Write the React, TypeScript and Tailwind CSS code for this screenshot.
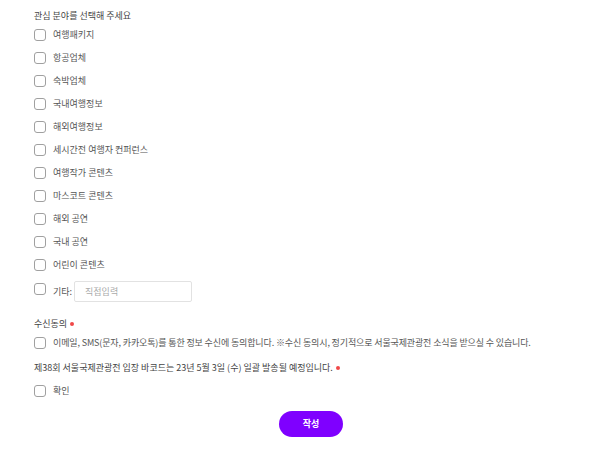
import React from "react";

const items = [
  "여행패키지",
  "항공업체",
  "숙박업체",
  "국내여행정보",
  "해외여행정보",
  "세시간전 여행자 컨퍼런스",
  "여행작가 콘텐츠",
  "마스코트 콘텐츠",
  "해외 공연",
  "국내 공연",
  "어린이 콘텐츠",
];

function Box({ className = "" }: { className?: string }) {
  return (
    <span
      className={
        "inline-block w-[12px] h-[12px] rounded-[3px] border border-[#a0a0a0] bg-white shrink-0 " +
        className
      }
    />
  );
}

function Dot() {
  return <span className="inline-block w-[4px] h-[4px] rounded-full bg-[#f04848] ml-[3px] align-middle" />;
}

export default function App() {
  return (
    <div
      className="w-[600px] h-[467px] bg-white pl-[34px] pr-[12px] pt-[9px] text-[9px] text-[#555]"
      style={{ fontFamily: '"Noto Sans CJK KR", "Noto Sans", sans-serif' }}
    >
      <div className="leading-[14px] h-[14px] text-[#444]">관심 분야를 선택해 주세요</div>
      {items.map((t) => (
        <div key={t} className="h-[23px] flex items-center">
          <Box />
          <span className="ml-[7px] leading-[14px]">{t}</span>
        </div>
      ))}
      <div className="mt-[5px] h-[21px] flex items-start">
        <Box className="mt-[2px]" />
        <span className="ml-[7px] leading-[21px]">기타:</span>
        <div className="ml-[2px] w-[118px] h-[21px] border border-[#e2e2e2] rounded-[2px] flex items-center pl-[10px] text-[#aaa]">
          직접입력
        </div>
      </div>
      <div className="mt-[15px] leading-[14px] h-[14px] flex items-center text-[#444]">
        수신동의
        <Dot />
      </div>
      <div className="h-[23px] flex items-center">
        <Box />
        <span className="ml-[7px] leading-[14px] tracking-[-0.015em]">
          이메일, SMS(문자, 카카오톡)를 통한 정보 수신에 동의합니다. ※수신 동의시, 정기적으로 서울국제관광전 소식을 받으실 수 있습니다.
        </span>
      </div>
      <div className="mt-[7px] leading-[14px] h-[14px] flex items-center text-[#444]">
        <span>제38회 서울국제관광전 입장 바코드는 23년 5월 3일 (수) 일괄 발송될 예정입니다.</span>
        <Dot />
      </div>
      <div className="mt-[4px] h-[23px] flex items-center">
        <Box />
        <span className="ml-[7px] leading-[14px]">확인</span>
      </div>
      <div className="mt-[9px] flex justify-center">
        <button className="w-[64px] h-[26px] rounded-full bg-[#7f00ff] text-white text-[9px] font-bold">
          작성
        </button>
      </div>
    </div>
  );
}
